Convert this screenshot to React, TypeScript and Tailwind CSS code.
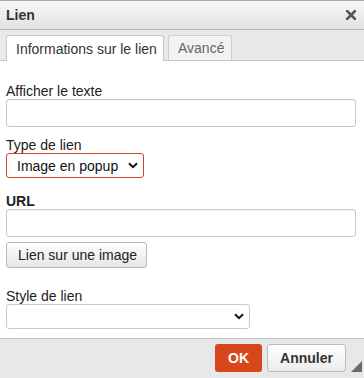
import React from "react";

function Chevron() {
  return (
    <svg width="10" height="7" viewBox="0 0 10 7" className="shrink-0">
      <path d="M1 1.2 L5 5.2 L9 1.2" fill="none" stroke="#111" strokeWidth="2" />
    </svg>
  );
}

function TextInput({ className = "" }: { className?: string }) {
  return (
    <div
      className={`h-[28px] w-[350px] rounded-[3px] border border-[#c9c9c9] bg-white shadow-[inset_0_1px_1px_rgba(0,0,0,0.06)] ${className}`}
    />
  );
}

export default function App() {
  return (
    <div
      className="flex h-[378px] w-[364px] flex-col overflow-hidden bg-white text-[14px] text-[#222]"
      style={{ fontFamily: '"Liberation Sans", Arial, sans-serif' }}
    >
      {/* title bar */}
      <div className="flex h-[30px] shrink-0 items-center justify-between border-t border-b border-t-[#a8a8a8] border-b-[#b5b5b5] bg-gradient-to-b from-[#f7f7f7] to-[#e2e2e2] pl-[6px] pr-[8px]">
        <span className="font-bold leading-4 text-[#333]">Lien</span>
        <svg width="10" height="10" viewBox="0 0 10 10">
          <path d="M1 1 L9 9 M9 1 L1 9" stroke="#555" strokeWidth="2.6" strokeLinecap="square" />
        </svg>
      </div>

      {/* tabs */}
      <div className="flex h-[31px] shrink-0 items-end gap-[4px] border-b border-[#c6c6c6] bg-[#e9e9e9] px-[6px]">
        <div className="-mb-px flex h-[26px] w-[158px] items-center rounded-t-[3px] border border-b-0 border-[#c6c6c6] bg-white pl-[9px] leading-4 text-[#333]">
          Informations sur le lien
        </div>
        <div className="flex h-[25px] w-[64px] items-center rounded-t-[3px] border border-b-0 border-[#cdcdcd] bg-[#f2f2f2] pl-[9px] leading-4 text-[#666]">
          Avancé
        </div>
      </div>

      {/* body */}
      <div className="flex flex-1 flex-col px-[6px] pt-[22px]">
        <div className="h-[16px] leading-4">Afficher le texte</div>
        <TextInput />

        <div className="mt-[10px] h-[16px] leading-4">Type de lien</div>
        <div className="flex h-[25px] w-[138px] items-center justify-between rounded-[3px] border border-[#cf4a22] bg-white pl-[10px] pr-[5px] text-[#111]">
          <span className="leading-4">Image en popup</span>
          <Chevron />
        </div>

        <div className="mt-[15px] h-[16px] font-bold leading-4">URL</div>
        <TextInput />

        <div className="mt-[5px] flex h-[26px] w-[141px] items-center rounded-[3px] border border-[#b9b9b9] bg-gradient-to-b from-[#fdfdfd] to-[#e6e6e6] pl-[11px] leading-4 text-[#222]">
          Lien sur une image
        </div>

        <div className="mt-[20px] h-[16px] leading-4">Style de lien</div>
        <div className="flex h-[25px] w-[244px] items-center justify-end rounded-[3px] border border-[#c9c9c9] bg-white pr-[5px]">
          <Chevron />
        </div>
      </div>

      {/* footer */}
      <div className="relative flex h-[40px] shrink-0 items-start justify-end gap-[5px] border-t border-[#c4c4c4] bg-[#e8e8e8] pr-[18px] pt-[5px]">
        <div className="flex h-[28px] w-[47px] items-center justify-center rounded-[3px] bg-[#d8471b] font-bold text-white">
          OK
        </div>
        <div className="flex h-[28px] w-[79px] items-center justify-center rounded-[3px] border border-[#bcbcbc] bg-gradient-to-b from-[#ffffff] to-[#ececec] font-bold text-[#333]">
          Annuler
        </div>
        <svg className="absolute bottom-[6px] right-[2px]" width="11" height="11" viewBox="0 0 11 11">
          <path d="M11 0 L11 11 L0 11 Z" fill="#6a6a6a" />
        </svg>
      </div>
    </div>
  );
}
